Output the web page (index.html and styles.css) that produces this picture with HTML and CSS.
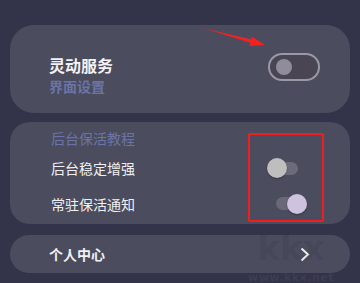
FILE: index.html
```html
<!DOCTYPE html>
<html lang="zh-CN">
<head>
    <meta charset="UTF-8">
    <meta name="viewport" content="width=device-width, initial-scale=1.0">
    <title>灵动服务</title>
    <link rel="stylesheet" href="styles.css">
</head>
<body>

    <!-- 红色箭头标注 -->
    <svg class="arrow" width="360" height="60" viewBox="0 0 360 60">
        <polygon points="203,28 251.5,39.6 251.8,36.4 265,45 249.2,46.1 250.3,42.8" fill="#f2231f"/>
    </svg>

    <div class="page">
        <!-- 灵动服务 -->
        <div class="card card-main">
            <div class="title-block">
                <div class="title">灵动服务</div>
                <div class="subtitle">界面设置</div>
            </div>
            <div class="toggle-big"><span class="knob"></span></div>
        </div>

        <!-- 后台保活 -->
        <div class="card card-keep">
            <div class="keep-head">后台保活教程</div>
            <div class="row">
                <span class="row-label">后台稳定增强</span>
                <span class="switch switch-off"><span class="thumb"></span></span>
            </div>
            <div class="row row-last">
                <span class="row-label">常驻保活通知</span>
                <span class="switch switch-on"><span class="thumb"></span></span>
            </div>
            <div class="mark-box"></div>
        </div>

        <!-- 个人中心 -->
        <div class="card card-user">
            <span class="user-label">个人中心</span>
            <svg class="chevron" width="10" height="15" viewBox="0 0 10 15">
                <polyline points="1.5,1.5 8,7.5 1.5,13.5" fill="none" stroke="#ececf0" stroke-width="2"/>
            </svg>
        </div>
    </div>

    <div class="watermark">
        <div class="wm-logo">kkx</div>
        <div class="wm-url">www.kkx.net</div>
    </div>

</body>
</html>
```

FILE: styles.css
```css
body, html {
    margin: 0;
    padding: 0;
    height: 100%;
    overflow: hidden;
    background-color: #33344a;
    font-family: "Noto Sans CJK SC", "Noto Sans", sans-serif;
}

.page {
    display: flex;
    flex-direction: column;
    padding: 25px 10px 0 10px;
}

.card {
    background-color: #4b4c5e;
    position: relative;
}

/* 灵动服务 */
.card-main {
    height: 88px;
    border-radius: 24px;
    display: flex;
    justify-content: space-between;
    align-items: flex-start;
    padding: 0 30px 0 39px;
    box-sizing: border-box;
}

.title-block {
    padding-top: 30px;
}

.title {
    color: #f2f2f4;
    font-size: 16px;
    font-weight: bold;
    line-height: 20px;
}

.subtitle {
    color: #6b74a8;
    font-size: 14px;
    font-weight: bold;
    line-height: 18px;
    margin-top: 2px;
}

.toggle-big {
    margin-top: 28px;
    width: 52px;
    height: 28px;
    box-sizing: border-box;
    border: 2px solid #9a98a5;
    border-radius: 14px;
    background-color: #4a4553;
    display: flex;
    align-items: center;
    padding-left: 6px;
}

.knob {
    width: 16px;
    height: 16px;
    border-radius: 50%;
    background-color: #8f8d9b;
}

/* 后台保活 */
.card-keep {
    margin-top: 9px;
    border-radius: 20px;
    padding: 5px 0 3px 41px;
}

.keep-head {
    color: #6b74a8;
    font-size: 14px;
    height: 23px;
    line-height: 23px;
}

.row {
    display: flex;
    justify-content: space-between;
    align-items: center;
    height: 36px;
}

.row-last {
    height: 35px;
}

.row-label {
    color: #f0f0f2;
    font-size: 14px;
}

.switch {
    position: relative;
    width: 31px;
    height: 20px;
}

.switch::before {
    content: "";
    position: absolute;
    top: 3.5px;
    height: 13px;
    border-radius: 7px;
    background-color: #6b6b7b;
}

.switch-off {
    margin-right: 52px;
}

.switch-off::before {
    left: 1px;
    right: 0;
}

.switch-on {
    margin-right: 43px;
}

.switch-on::before {
    left: 0;
    right: 4px;
    background-color: #6a6778;
}

.thumb {
    position: absolute;
    top: 0;
    width: 20px;
    height: 20px;
    border-radius: 50%;
    box-shadow: 0 1px 2px rgba(0, 0, 0, 0.3);
}

.switch-off .thumb {
    left: 0;
    background-color: #bebebe;
}

.switch-on .thumb {
    right: 0;
    background-color: #cfc2df;
}

/* 红框标注 */
.mark-box {
    position: absolute;
    left: 238px;
    top: 11px;
    width: 76px;
    height: 89px;
    box-sizing: border-box;
    border: 2px solid #f01e1e;
    border-radius: 2px;
}

.arrow {
    position: absolute;
    left: 0;
    top: 0;
    z-index: 2;
}

/* 个人中心 */
.card-user {
    margin-top: 11px;
    height: 38px;
    border-radius: 19px;
    display: flex;
    align-items: center;
    justify-content: space-between;
    padding: 0 40px 0 39px;
}

.user-label {
    color: #f0f0f2;
    font-size: 14px;
    font-weight: bold;
}

.chevron {
    display: block;
}

/* 水印 */
.watermark {
    position: absolute;
    left: 243px;
    top: 228px;
    width: 96px;
    text-align: center;
    pointer-events: none;
}

.wm-logo {
    font-family: "DejaVu Sans", sans-serif;
    font-weight: bold;
    font-size: 34px;
    line-height: 40px;
    color: rgba(30, 30, 45, 0.1);
}

.wm-url {
    font-family: "DejaVu Sans", sans-serif;
    font-weight: bold;
    font-size: 11px;
    line-height: 12px;
    letter-spacing: 0.5px;
    margin-top: 4px;
    color: rgba(255, 255, 255, 0.06);
}
```
